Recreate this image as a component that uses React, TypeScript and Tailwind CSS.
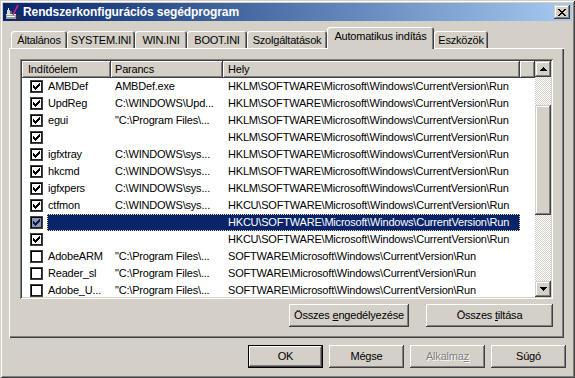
import React from 'react';

const HKLM = 'HKLM\\SOFTWARE\\Microsoft\\Windows\\CurrentVersion\\Run';
const HKCU = 'HKCU\\SOFTWARE\\Microsoft\\Windows\\CurrentVersion\\Run';
const SW = 'SOFTWARE\\Microsoft\\Windows\\CurrentVersion\\Run';
const PF = '"C:\\Program Files\\...';
const WS = 'C:\\WINDOWS\\sys...';

type Row = { name: string; cmd: string; loc: string; on: boolean; sel?: boolean };

const rows: Row[] = [
  { name: 'AMBDef', cmd: 'AMBDef.exe', loc: HKLM, on: true },
  { name: 'UpdReg', cmd: 'C:\\WINDOWS\\Upd...', loc: HKLM, on: true },
  { name: 'egui', cmd: PF, loc: HKLM, on: true },
  { name: '', cmd: '', loc: HKLM, on: true },
  { name: 'igfxtray', cmd: WS, loc: HKLM, on: true },
  { name: 'hkcmd', cmd: WS, loc: HKLM, on: true },
  { name: 'igfxpers', cmd: WS, loc: HKLM, on: true },
  { name: 'ctfmon', cmd: WS, loc: HKCU, on: true },
  { name: '', cmd: '', loc: HKCU, on: true, sel: true },
  { name: '', cmd: '', loc: HKCU, on: true },
  { name: 'AdobeARM', cmd: PF, loc: SW, on: false },
  { name: 'Reader_sl', cmd: PF, loc: SW, on: false },
  { name: 'Adobe_U...', cmd: PF, loc: SW, on: false },
];

const BTN =
  'shadow-[inset_-1px_-1px_#404040,inset_1px_1px_#fff,inset_-2px_-2px_#808080] bg-[#d4d0c8]';
const SBTN =
  'shadow-[inset_-1px_-1px_#404040,inset_1px_1px_#d4d0c8,inset_-2px_-2px_#808080,inset_2px_2px_#fff] bg-[#d4d0c8]';

const checkPixels: [number, number, number][] = [
  [9, 3, 1],
  [8, 4, 2],
  [3, 5, 1],
  [7, 5, 3],
  [3, 6, 2],
  [6, 6, 3],
  [3, 7, 5],
  [4, 8, 3],
  [5, 9, 1],
];

function CheckBox({ on, sel }: { on: boolean; sel?: boolean }) {
  return (
    <div
      className={`w-[13px] h-[13px] shadow-[inset_1px_1px_#404040,inset_-1px_-1px_#404040,inset_2px_2px_#000,inset_-2px_-2px_#202020] ${
        sel ? 'bg-[#8d96b5]' : 'bg-white'
      }`}
    >
      {on && (
        <svg width="13" height="13" viewBox="0 0 13 13" shapeRendering="crispEdges">
          {checkPixels.map(([x, y, w], i) => (
            <rect key={i} x={x} y={y} width={w} height={1} fill={sel ? '#0a1a4a' : '#000'} />
          ))}
        </svg>
      )}
    </div>
  );
}

function ArrowUp() {
  return (
    <svg width="7" height="4" viewBox="0 0 7 4" shapeRendering="crispEdges">
      <rect x="3" y="0" width="1" height="1" fill="#000" />
      <rect x="2" y="1" width="3" height="1" fill="#000" />
      <rect x="1" y="2" width="5" height="1" fill="#000" />
      <rect x="0" y="3" width="7" height="1" fill="#000" />
    </svg>
  );
}

function ArrowDown() {
  return (
    <svg width="7" height="4" viewBox="0 0 7 4" shapeRendering="crispEdges">
      <rect x="0" y="0" width="7" height="1" fill="#000" />
      <rect x="1" y="1" width="5" height="1" fill="#000" />
      <rect x="2" y="2" width="3" height="1" fill="#000" />
      <rect x="3" y="3" width="1" height="1" fill="#000" />
    </svg>
  );
}

const xPixels: [number, number, number][] = [
  [0, 0, 2], [6, 0, 2],
  [1, 1, 2], [5, 1, 2],
  [2, 2, 4],
  [3, 3, 2],
  [2, 4, 4],
  [1, 5, 2], [5, 5, 2],
  [0, 6, 2], [6, 6, 2],
];

function TitleIcon() {
  return (
    <svg width="16" height="16" viewBox="0 0 16 16" shapeRendering="crispEdges">
      <rect x="1" y="10" width="10" height="5" fill="#9a9a9a" />
      <rect x="1" y="10" width="10" height="1" fill="#e8e8e8" />
      <rect x="2" y="12" width="8" height="1" fill="#ffffff" />
      <rect x="2" y="6" width="3" height="4" fill="#d8d8d8" />
      <rect x="5" y="7" width="2" height="3" fill="#6a6a6a" />
      <rect x="3" y="4" width="1" height="2" fill="#ffffff" />
      <path d="M8 11 L13 1" stroke="#e0208c" strokeWidth="1.6" shapeRendering="auto" />
      <rect x="11" y="11" width="4" height="4" fill="#303030" />
    </svg>
  );
}

function Tab({ label, w, active }: { label: string; w: string; active?: boolean }) {
  return (
    <div
      className={`${w} flex items-center justify-center rounded-t-[3px] bg-[#d4d0c8] shadow-[inset_1px_1px_#fff,inset_-1px_0_#404040,inset_-2px_0_#808080] ${
        active ? 'h-[22px] -mb-[1px] relative z-10 pb-[3px]' : 'h-[17px] pt-[1px]'
      }`}
    >
      <span>{label}</span>
    </div>
  );
}

function PushButton({
  children,
  w,
  def,
  disabled,
}: {
  children: React.ReactNode;
  w: string;
  def?: boolean;
  disabled?: boolean;
}) {
  if (def) {
    return (
      <div className={`${w} h-[23px] border border-black flex`}>
        <div className={`flex-1 flex items-center justify-center ${BTN}`}>
          <span>{children}</span>
        </div>
      </div>
    );
  }
  return (
    <div
      className={`${w} h-[23px] flex items-center justify-center ${BTN} ${
        disabled ? 'text-[#808080] [text-shadow:1px_1px_0_#fff]' : ''
      }`}
    >
      <span className="whitespace-pre">{children}</span>
    </div>
  );
}

export default function App() {
  return (
    <div className="w-[575px] h-[378px] overflow-hidden bg-[#d4d0c8] p-[3px] flex flex-col font-['Liberation_Sans',Arial,sans-serif] text-[11px] tracking-[-0.2px] text-black shadow-[inset_1px_1px_#d4d0c8,inset_-1px_-1px_#404040,inset_2px_2px_#fff,inset_-2px_-2px_#808080]">
      {/* Title bar */}
      <div className="h-[18px] flex items-center bg-linear-to-r from-[#0a246a] to-[#a6caf0] pl-[2px] pr-[2px]">
        <TitleIcon />
        <div className="ml-[2px] text-white font-bold text-[12px] tracking-[-0.1px] leading-none">
          Rendszerkonfigurációs segédprogram
        </div>
        <div className="flex-1" />
        <div className={`w-[16px] h-[14px] flex items-center justify-center ${SBTN}`}>
          <svg width="8" height="7" viewBox="0 0 8 7" shapeRendering="crispEdges">
            {xPixels.map(([x, y, w], i) => (
              <rect key={i} x={x} y={y} width={w} height={1} fill="#000" />
            ))}
          </svg>
        </div>
      </div>

      {/* Tabs */}
      <div className="mt-[6px] ml-[8px] h-[21px] flex items-end">
        <Tab label="Általános" w="w-[56px]" />
        <Tab label="SYSTEM.INI" w="w-[68px]" />
        <Tab label="WIN.INI" w="w-[52px]" />
        <Tab label="BOOT.INI" w="w-[60px]" />
        <Tab label="Szolgáltatások" w="w-[80px]" />
        <Tab label="Automatikus indítás" w="w-[107px]" active />
        <Tab label="Eszközök" w="w-[54px]" />
      </div>

      {/* Panel */}
      <div className="ml-[6px] w-[555px] h-[290px] p-[11px] flex flex-col shadow-[inset_1px_1px_#fff,inset_-1px_-1px_#404040,inset_-2px_-2px_#808080]">
        {/* List view */}
        <div className="w-[533px] h-[240px] p-[2px] bg-white shadow-[inset_1px_1px_#808080,inset_-1px_-1px_#fff,inset_2px_2px_#404040,inset_-2px_-2px_#d4d0c8] flex">
          <div className="w-[513px] h-[236px] overflow-hidden flex flex-col">
            <div className="h-[17px] flex shrink-0">
              <div className={`w-[89px] h-full flex items-center pl-[6px] ${BTN}`}>Indítóelem</div>
              <div className={`w-[112px] h-full flex items-center pl-[4px] ${BTN}`}>Parancs</div>
              <div className={`w-[297px] h-full flex items-center pl-[5px] ${BTN}`}>Hely</div>
              <div className={`w-[15px] h-full ${BTN}`} />
            </div>
            {rows.map((r, i) => (
              <div key={i} className="h-[17px] flex shrink-0 items-center">
                <div className="w-[25px] pl-[8px] flex items-center">
                  <CheckBox on={r.on} sel={r.sel} />
                </div>
                <div
                  className={`w-[473px] h-[17px] flex items-center whitespace-nowrap ${
                    r.sel
                      ? 'bg-[#0a246a] text-white outline-1 outline-dotted outline-[#f5db95] -outline-offset-1'
                      : ''
                  }`}
                >
                  <div className="w-[64px] pl-[1px] overflow-hidden">{r.name}</div>
                  <div className="w-[112px] pl-[4px] overflow-hidden">{r.cmd}</div>
                  <div className="w-[297px] pl-[5px] overflow-hidden">{r.loc}</div>
                </div>
              </div>
            ))}
          </div>
          {/* Scrollbar */}
          <div className="w-[16px] h-[236px] flex flex-col bg-[repeating-conic-gradient(#fff_0_25%,#d4d0c8_0_50%)] bg-[length:2px_2px]">
            <div className={`h-[16px] flex items-center justify-center ${SBTN}`}>
              <ArrowUp />
            </div>
            <div className="h-[28px]" />
            <div className={`h-[110px] ${SBTN}`} />
            <div className="flex-1" />
            <div className={`h-[16px] flex items-center justify-center ${SBTN}`}>
              <ArrowDown />
            </div>
          </div>
        </div>

        {/* Panel buttons */}
        <div className="mt-[5px] flex justify-end gap-[17px]">
          <PushButton w="w-[120px]">
            {'Összes '}
            <span className="underline">e</span>
            {'ngedélyezése'}
          </PushButton>
          <PushButton w="w-[127px]">
            {'Összes '}
            <span className="underline">t</span>
            {'iltása'}
          </PushButton>
        </div>
      </div>

      {/* Dialog buttons */}
      <div className="mt-[7px] pr-[6px] flex justify-end gap-[6px]">
        <PushButton w="w-[75px]" def>
          OK
        </PushButton>
        <PushButton w="w-[75px]">Mégse</PushButton>
        <PushButton w="w-[75px]" disabled>
          {'Alkalma'}
          <span className="underline">z</span>
        </PushButton>
        <PushButton w="w-[75px]">Súgó</PushButton>
      </div>
    </div>
  );
}
